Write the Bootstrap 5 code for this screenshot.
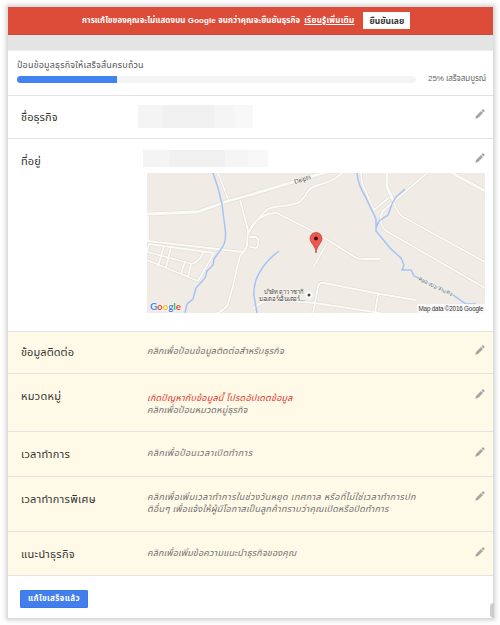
<!DOCTYPE html>
<html lang="th">
<head>
<meta charset="utf-8">
<meta name="viewport" content="width=device-width, initial-scale=1">
<title>Google My Business</title>
<link href="https://cdn.jsdelivr.net/npm/bootstrap@5.3.0/dist/css/bootstrap.min.css" rel="stylesheet">
<style>
body{font-family:"Liberation Sans","Noto Sans Thai","Noto Sans",sans-serif;font-size:9px;line-height:12px;color:#555;background:#fdfdfd;height:625px;padding:7px 0 0 8px;overflow:hidden}
.sheet{width:485px;height:611px;background:#fff;box-shadow:0 0 0 1px #dcdcdc,0 0 4px 2px #d0d0d0}
.notice{height:28px;background:#dd4b39;border-bottom:1px solid #c84d3d;font-size:8px;padding-left:74px}
.notice span{letter-spacing:.08px}
.notice a{letter-spacing:.22px}
.notice .btn{width:47px;height:17px;font-size:8.5px;line-height:12px;color:#333;margin-left:9px;border-radius:0}
.strip{height:16px;background:#e4e4e4;border-bottom:1px solid #eee}
.completion{height:45px;padding:8px 7px 0 9px;border-bottom:1px solid #e3e3e3;letter-spacing:.17px}
.completion .progress{width:399px;height:7px;background:#f4f4f4;border-radius:4px}
.completion .progress-bar{background:#4183f0}
.pct{font-size:8px;letter-spacing:-.06px;color:#666}
.entry{border-bottom:1px solid #e3e3e3;padding-right:8px}
.entry.todo{background:#fff9e7}
.entry-label{width:139px;padding-left:13px;font-size:11px;line-height:16px;color:#333;flex:none;letter-spacing:.28px}
.entry-label.snug{letter-spacing:.08px}
.hint{font-style:italic;color:#707070;white-space:nowrap;letter-spacing:.18px}
.hint .alert-line{color:#e0352b;letter-spacing:.24px}
.hint .wide{letter-spacing:.37px}
.hint .mid{letter-spacing:.25px}
.pencil{width:10px;height:10px;flex:none;fill:#a5a5a5}
.blurred{background:linear-gradient(90deg,#f4f4f4 0 22%,#f0f0f0 22% 66%,#f5f5f5 66% 84%,#f8f8f8 84%)}
.b-name{width:115px;height:23px;margin-left:-9px}
.b-addr{width:125px;height:17px;margin-left:-4px}
.map{width:338px;height:140px;display:block;margin-top:6px}
.done{width:68px;height:18px;background:#427fed;border:1px solid #3b77e5;border-radius:1px;font-size:8px;line-height:10px;letter-spacing:.4px}
.grip{left:490px;top:603px;width:4px;height:15px;background:#ccc;border-radius:4px 0 0 4px}
</style>
</head>
<body>
<svg class="d-none"><symbol id="pen" viewBox="0 0 10 10"><path d="M.3 9.700 1 7l5-5 2 2-5 5zM6.500 1.500 7.400.6Q8 .1 8.600.6l.8.8q.5.6 0 1.200l-.9.9z"/></symbol></svg>
<main class="sheet">
  <div class="notice d-flex align-items-center text-white fw-bold text-nowrap">
    <span>การแก้ไขของคุณจะไม่แสดงบน Google จนกว่าคุณจะยืนยันธุรกิจ</span>
    <a href="#" class="text-white ms-1">เรียนรู้เพิ่มเติม</a>
    <button class="btn btn-light bg-white p-0 border-0 fw-bold">ยืนยันเลย</button>
  </div>
  <div class="strip"></div>
  <section class="completion">
    <div>ป้อนข้อมูลธุรกิจให้เสร็จสิ้นครบถ้วน</div>
    <div class="d-flex align-items-center justify-content-between text-nowrap" style="padding-top:2px">
      <div class="progress"><div class="progress-bar" style="width:25%"></div></div>
      <span class="pct">25% เสร็จสมบูรณ์</span>
    </div>
  </section>

  <section class="entry d-flex" style="height:43px">
    <div class="entry-label snug" style="padding-top:13px">ชื่อธุรกิจ</div>
    <div class="flex-grow-1" style="padding-top:9px"><div class="blurred b-name"></div></div>
    <svg class="pencil" style="margin-top:13px"><use href="#pen"/></svg>
  </section>
  <section class="entry d-flex" style="height:193px">
    <div class="entry-label snug" style="padding-top:14px">ที่อยู่</div>
    <div style="padding-top:11px;width:328px">
      <div class="blurred b-addr"></div>
      <svg class="map" viewBox="147 173 338 140" role="img">
        <rect x="147" y="173" width="338" height="140" fill="#f0ece5"/>
        <defs><g id="roads" fill="none" stroke-linejoin="round">
          <path d="M218 173 229 201M240 200 248 230 247 245Q246 250 240 256L237 268 233 286 228 304Q225 310 217 313M148 215V241M147 241 200 247 243 252 248 245M149 244 214 253 198 281 147 260M147 252 170 258 192 264Q202 260 203 251M149 244 147 252M164 246 158 266M171 247 166 268M185 261 181 274M191 264 188 277M250 229Q253 222 262 217Q268 213 277 213L320 235 350 254Q358 260 365 259L380 259M248 234Q257 218 268 209Q275 206 285 206L298 203Q303 200 308 191Q312 186 322 184Q335 180 342 173M250 237 256 237Q260 240 257 248L250 247M327 243 314 266M313 313 318 287Q319 282 324 283L380 294 416 300M378 294 375 313M253 309Q260 301 275 300L315 303 380 313M361 173 362 183 374 210 391 196M387 173V187L396 208Q399 215 405 218L485 262M427 173 384 210Q380 214 381 222Q382 229 388 232L485 288M452 173 485 191"/>
        </g></defs>
        <use href="#roads" stroke="#dfdbd3" stroke-width="3"/>
        <use href="#roads" stroke="#fcfbf8" stroke-width="1.8"/>
        <g fill="none"><path d="M147 214 197 212 228 201 250 195 330 171M387 173V187L393 200M452 173 485 191" stroke="#deded6" stroke-width="4"/><path d="M147 214 197 212 228 201 250 195 330 171M387 173V187L393 200M452 173 485 191" stroke="#fbfaf7" stroke-width="2.8"/>
        <path d="M213 173Q219 189 222 204L225.500 232Q226 244 221 249L214 259 213 265 207 271 205 278 196 288 193 299 187 304 185 313M279 251Q267 260 261 270Q253 282 254 296L257 313M357 173Q358 185 365 196L376 219V231L390 248 401 258 404 265 402 270 411 270 414 276 450 293 466 304H476M376 228 379 221 388 215 392 204 396 197 405 189" stroke="#a3c3f8" stroke-width="1.500"/></g>
        <path d="M316 253C316 246 310 243 310 238.500A6 6 0 0 1 322 238.500C322 243 316.500 246 316 253Z" fill="#ec5a50" stroke="#b63b32" stroke-width=".7"/>
        <circle cx="316" cy="238.500" r="1.900" fill="#3b1010"/>
        <circle cx="309" cy="295" r="3.500" fill="#fff"/><circle cx="309" cy="295" r="1.500" fill="#444"/>
        <g font-family="Liberation Sans, sans-serif" font-size="6.500" fill="#444" stroke="#f7f4ee" stroke-width="1.500" paint-order="stroke">
          <text x="295" y="184" transform="rotate(-17 295 184)" textLength="17">Delphi</text>
          <text x="264" y="294" textLength="40" lengthAdjust="spacingAndGlyphs">บริษัท ดาวาซากิ</text>
          <text x="259" y="301" textLength="46" lengthAdjust="spacingAndGlyphs">มอเตอร์เอ็นเตอร์...</text>
          <text x="418" y="280" transform="rotate(26 418 280)" font-size="6" textLength="37" lengthAdjust="spacingAndGlyphs" fill="#5a7288">คลองบ่อวกแตง</text>
        </g>
        <rect x="417" y="304" width="68" height="9" fill="#fff" opacity=".75"/>
        <text x="418.500" y="311" font-family="Liberation Sans, sans-serif" font-size="6.300" fill="#333" textLength="65">Map data ©2016 Google</text>
        <text x="150" y="310" font-family="Lato, Liberation Sans, sans-serif" font-size="10" font-weight="700" stroke="#fff" stroke-width="1" paint-order="stroke" textLength="31"><tspan fill="#4285f4">G</tspan><tspan fill="#ea4335">o</tspan><tspan fill="#fbbc05">o</tspan><tspan fill="#4285f4">g</tspan><tspan fill="#34a853">l</tspan><tspan fill="#ea4335">e</tspan></text>
      </svg>
    </div>
    <svg class="pencil ms-auto" style="margin-top:14px"><use href="#pen"/></svg>
  </section>
  <section class="entry todo d-flex" style="height:42px">
    <div class="entry-label snug" style="padding-top:12px">ข้อมูลติดต่อ</div>
    <div class="hint flex-grow-1" style="padding-top:13px">คลิกเพื่อป้อนข้อมูลติดต่อสำหรับธุรกิจ</div>
    <svg class="pencil" style="margin-top:13px"><use href="#pen"/></svg>
  </section>
  <section class="entry todo d-flex" style="height:58px">
    <div class="entry-label" style="padding-top:14px">หมวดหมู่</div>
    <div class="hint flex-grow-1" style="padding-top:18px"><span class="alert-line">เกิดปัญหากับข้อมูลนี้ โปรดอัปเดตข้อมูล</span><br><span>คลิกเพื่อป้อนหมวดหมู่ธุรกิจ</span></div>
    <svg class="pencil" style="margin-top:15px"><use href="#pen"/></svg>
  </section>
  <section class="entry todo d-flex" style="height:45px">
    <div class="entry-label" style="padding-top:14px">เวลาทำการ</div>
    <div class="hint flex-grow-1" style="padding-top:15px"><span class="wide">คลิกเพื่อป้อนเวลาเปิดทำการ</span></div>
    <svg class="pencil" style="margin-top:15px"><use href="#pen"/></svg>
  </section>
  <section class="entry todo d-flex" style="height:55px">
    <div class="entry-label" style="padding-top:14px">เวลาทำการพิเศษ</div>
    <div class="hint flex-grow-1" style="padding-top:14px"><span class="wide">คลิกเพื่อเพิ่มเวลาทำการในช่วงวันหยุด เทศกาล หรือที่ไม่ใช่เวลาทำการปก</span><br><span class="mid">ติอื่นๆ เพื่อแจ้งให้ผู้มีโอกาสเป็นลูกค้าทราบว่าคุณเปิดหรือปิดทำการ</span></div>
    <svg class="pencil" style="margin-top:14px"><use href="#pen"/></svg>
  </section>
  <section class="entry todo d-flex" style="height:44px">
    <div class="entry-label" style="padding-top:14px">แนะนำธุรกิจ</div>
    <div class="hint flex-grow-1" style="padding-top:15px">คลิกเพื่อเพิ่มข้อความแนะนำธุรกิจของคุณ</div>
    <svg class="pencil" style="margin-top:15px"><use href="#pen"/></svg>
  </section>
  <footer style="padding:14px 12px"><button class="btn btn-primary done p-0 d-block fw-bold">แก้ไขเสร็จแล้ว</button></footer>
</main>
<div class="grip position-absolute"></div>
<script src="https://cdn.jsdelivr.net/npm/bootstrap@5.3.0/dist/js/bootstrap.bundle.min.js"></script>
</body>
</html>
